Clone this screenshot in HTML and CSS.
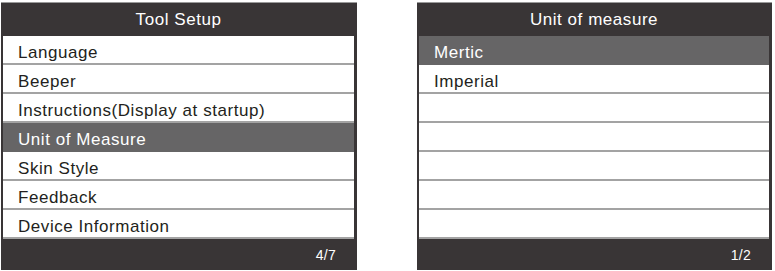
FILE: index.html
```html
<!DOCTYPE html>
<html>
<head>
<meta charset="utf-8">
<link rel="stylesheet" href="styles.css">
</head>
<body>
<div class="screens">
  <div class="panel panel-left">
    <div class="header">Tool Setup</div>
    <div class="list">
      <div class="row">Language</div>
      <div class="row">Beeper</div>
      <div class="row">Instructions(Display at startup)</div>
      <div class="row selected">Unit of Measure</div>
      <div class="row">Skin Style</div>
      <div class="row">Feedback</div>
      <div class="row">Device Information</div>
    </div>
    <div class="footer">4/7</div>
  </div>
  <div class="panel panel-right">
    <div class="header">Unit of measure</div>
    <div class="list">
      <div class="row selected">Mertic</div>
      <div class="row">Imperial</div>
      <div class="row"></div>
      <div class="row"></div>
      <div class="row"></div>
      <div class="row"></div>
      <div class="row"></div>
    </div>
    <div class="footer">1/2</div>
  </div>
</div>
</body>
</html>
```
FILE: styles.css
```css
html, body {
  margin: 0;
  padding: 0;
  background: #ffffff;
}
body {
  font-family: "Liberation Sans", Arial, sans-serif;
}
.screens {
  display: flex;
  padding: 2px 0 0 1px;
  gap: 60px;
}
.panel {
  display: flex;
  flex-direction: column;
  background: #393536;
  border-top: 1px solid #9a9a9a;
  padding: 0 3px 0 2px;
}
.panel-left {
  width: 351px;
}
.panel-right {
  width: 350px;
}
.header {
  height: 33px;
  display: flex;
  align-items: center;
  justify-content: center;
  color: #ffffff;
  font-size: 17px;
  letter-spacing: 0.55px;
}
.list {
  display: flex;
  flex-direction: column;
}
.row {
  height: 24px;
  padding-top: 3px;
  border-bottom: 2px solid #a3a3a3;
  background: #ffffff;
  color: #231f20;
  font-size: 17px;
  letter-spacing: 0.55px;
  line-height: 28px;
  padding-left: 15px;
}
.row.selected {
  background: #666566;
  color: #ffffff;
  border-bottom-color: #666566;
}
.footer {
  height: 31px;
  display: flex;
  align-items: center;
  justify-content: flex-end;
  padding-right: 18px;
  padding-top: 1px;
  box-sizing: border-box;
  color: #ffffff;
  font-size: 14px;
  letter-spacing: 0.3px;
}
```
